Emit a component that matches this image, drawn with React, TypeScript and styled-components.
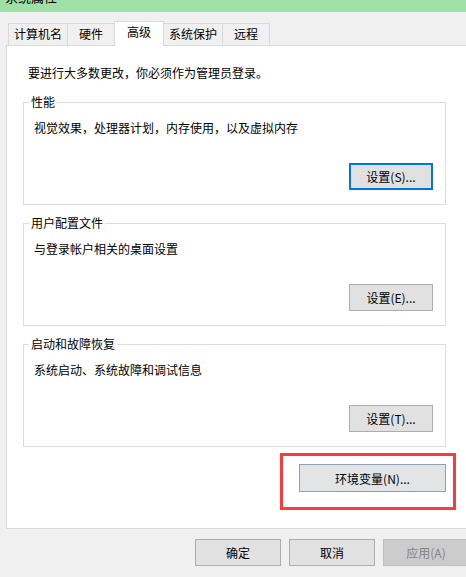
import React from 'react';
import styled, { createGlobalStyle, css } from 'styled-components';

const GlobalStyle = createGlobalStyle`
  html, body {
    margin: 0;
    padding: 0;
    background: #f0f0f0;
    overflow: hidden;
  }
  body {
    font-family: "Microsoft YaHei", "Noto Sans CJK SC", sans-serif;
    font-size: 12px;
    color: #000;
  }
`;

const Dialog = styled.div`
  width: 478px;
  height: 577px;
  background: #f0f0f0;
  display: flex;
  flex-direction: column;
`;

const TitleBar = styled.div`
  height: 12px;
  background: #9fe0a6;
  overflow: hidden;
`;

const Title = styled.div`
  margin: -12px 0 0 5px;
  font-size: 13px;
  line-height: 18px;
`;

const TabStrip = styled.div`
  display: flex;
  align-items: flex-end;
  height: 24px;
  margin: 9px 0 0 8px;
  position: relative;
  z-index: 1;
`;

const Tab = styled.div<{ $active?: boolean }>`
  box-sizing: border-box;
  min-width: 48px;
  height: 22px;
  padding: 0 5px;
  margin-left: -1px;
  line-height: 20px;
  text-align: center;
  background: #f0f0f0;
  border: 1px solid #d9d9d9;
  border-bottom: none;

  &:first-child {
    margin-left: 0;
  }

  ${p => p.$active && css`
    height: 25px;
    margin-bottom: -1px;
    padding: 0 12px;
    background: #fff;
  `}
`;

const Panel = styled.div`
  margin: 0 6px;
  background: #fff;
  border: 1px solid #d9d9d9;
  padding: 19px 15px 18px 16px;
  display: flex;
  flex-direction: column;
`;

const Intro = styled.div`
  line-height: 16px;
  margin-left: 5px;
`;

const Group = styled.fieldset<{ $first?: boolean }>`
  box-sizing: border-box;
  width: 423px;
  min-width: 0;
  margin: ${p => (p.$first ? '14px' : '11px')} 0 0;
  padding: 0 12px 14px 10px;
  border: 1px solid #dcdcdc;
  display: flex;
  flex-direction: column;
`;

const Legend = styled.legend`
  font-size: 12px;
  line-height: 14px;
  padding: 0 2px;
  margin-left: -5px;
`;

const Desc = styled.div`
  margin-top: 11px;
  line-height: 16px;
`;

type Variant = 'normal' | 'focused' | 'hover' | 'disabled';

const Button = styled.button<{ $variant?: Variant; $w?: number }>`
  box-sizing: border-box;
  width: ${p => p.$w ?? 84}px;
  height: 27px;
  padding: 0;
  font-family: inherit;
  font-size: 12px;
  color: #000;
  background: #e1e1e1;
  border: 1px solid #adadad;

  ${p => p.$variant === 'focused' && css`
    border: 2px solid #0078d7;
  `}
  ${p => p.$variant === 'hover' && css`
    height: 28px;
    background: #e3e4e6;
    border-color: #8ea2b5;
  `}
  ${p => p.$variant === 'disabled' && css`
    background: #cccccc;
    border-color: #bfbfbf;
    color: #838383;
  `}
`;

const GroupButton = styled(Button)`
  margin-top: 27px;
  align-self: flex-end;
`;

const Highlight = styled.div`
  margin-top: 6px;
  align-self: flex-end;
  border: 3px solid #fb3b3b;
  padding: 8px 7px 15px 16px;
  display: flex;
`;

const Footer = styled.div`
  display: flex;
  justify-content: flex-end;
  gap: 8px;
  margin-top: 10px;
  padding-right: 9px;
`;

const tabs = ['计算机名', '硬件', '高级', '系统保护', '远程'];

const groups = [
  { title: '性能', desc: '视觉效果，处理器计划，内存使用，以及虚拟内存', button: '设置(S)...', variant: 'focused' as Variant },
  { title: '用户配置文件', desc: '与登录帐户相关的桌面设置', button: '设置(E)...', variant: 'normal' as Variant },
  { title: '启动和故障恢复', desc: '系统启动、系统故障和调试信息', button: '设置(T)...', variant: 'normal' as Variant },
];

const App: React.FC = () => {
  return (
    <>
      <GlobalStyle />
      <Dialog>
        <TitleBar>
          <Title>系统属性</Title>
        </TitleBar>

        <TabStrip>
          {tabs.map(t => (
            <Tab key={t} $active={t === '高级'}>{t}</Tab>
          ))}
        </TabStrip>

        <Panel>
          <Intro>要进行大多数更改，你必须作为管理员登录。</Intro>

          {groups.map((g, i) => (
            <Group key={g.title} $first={i === 0}>
              <Legend>{g.title}</Legend>
              <Desc>{g.desc}</Desc>
              <GroupButton $variant={g.variant}>{g.button}</GroupButton>
            </Group>
          ))}

          <Highlight>
            <Button $variant="hover" $w={147}>环境变量(N)...</Button>
          </Highlight>
        </Panel>

        <Footer>
          <Button $w={86}>确定</Button>
          <Button $w={86}>取消</Button>
          <Button $w={86} $variant="disabled">应用(A)</Button>
        </Footer>
      </Dialog>
    </>
  );
};

export default App;
